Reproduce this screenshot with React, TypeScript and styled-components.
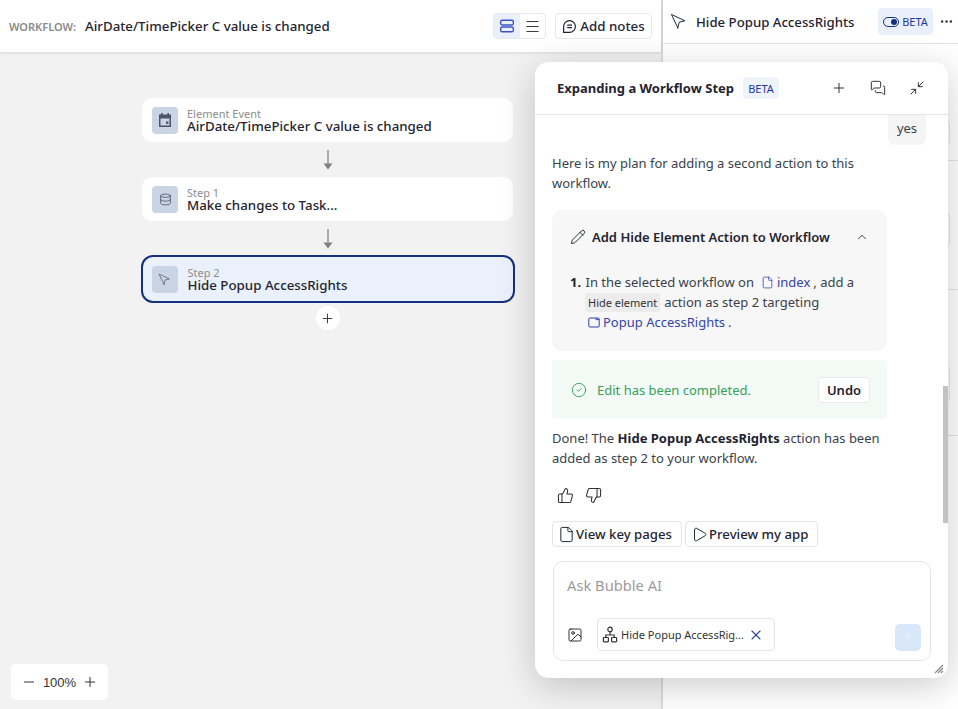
import styled, { createGlobalStyle } from "styled-components";
import {
  ArrowUp,
  ChevronUp,
  CircleCheck,
  Database,
  Ellipsis,
  File,
  Image,
  Menu,
  MessagesSquare,
  Minimize2,
  Minus,
  Navigation,
  Pencil,
  Play,
  Plus,
  ThumbsDown,
  ThumbsUp,
  X,
} from "lucide-react";

const GlobalStyle = createGlobalStyle`
  html, body { margin: 0; height: 100%; }
  body { font-family: "Noto Sans", "Open Sans", "Liberation Sans", sans-serif; color: #1f2430; overflow: hidden; }
  #root { height: 100%; }
  * { box-sizing: border-box; }
`;

const Page = styled.div`
  position: relative;
  width: 958px;
  height: 709px;
  display: flex;
  overflow: hidden;
  background: #f2f2f2;
`;

const LeftSide = styled.div`
  width: 663px;
  display: flex;
  flex-direction: column;
  border-right: 2px solid #dcdcdc;
  flex: none;
`;

const TopBar = styled.div`
  height: 52px;
  background: #fff;
  display: flex;
  align-items: center;
  padding: 0 9px 0 9px;
  box-shadow: 0 1px 3px rgba(0, 0, 0, 0.12);
`;

const WorkflowLabel = styled.span`
  font-size: 11px;
  font-weight: 600;
  color: #8a8a8a;
  margin-right: 9px;
`;

const WorkflowName = styled.span`
  font-size: 13.3px;
  font-weight: 500;
  flex: 1;
`;

const ViewToggle = styled.div`
  display: flex;
  width: 53px;
  height: 26px;
  border: 1px solid #e8e8e8;
  border-radius: 4px;
  margin-right: 9px;
`;

const ToggleCell = styled.div<{ $active?: boolean }>`
  width: 26px;
  display: flex;
  align-items: center;
  justify-content: center;
  background: ${(p) => (p.$active ? "#e9f0fb" : "transparent")};
  color: ${(p) => (p.$active ? "#3c55c4" : "#333")};
`;

const NotesButton = styled.div`
  height: 26px;
  width: 97px;
  border: 1px solid #e8e8e8;
  border-radius: 4px;
  display: flex;
  align-items: center;
  justify-content: center;
  gap: 3px;
  font-size: 13.3px;
  font-weight: 500;
`;

const Canvas = styled.div`
  flex: 1;
  padding: 46px 0 0 142px;
  position: relative;
`;

const Flow = styled.div`
  width: 371px;
  display: flex;
  flex-direction: column;
  align-items: center;
`;

const StepCard = styled.div<{ $selected?: boolean }>`
  width: ${(p) => (p.$selected ? "374px" : "100%")};
  height: ${(p) => (p.$selected ? "48px" : "44px")};
  margin-top: ${(p) => (p.$selected ? "-1px" : "0")};
  background: ${(p) => (p.$selected ? "#eaf1fc" : "#fff")};
  border: ${(p) => (p.$selected ? "2px solid #14307f" : "none")};
  border-radius: ${(p) => (p.$selected ? "12px" : "10px")};
  display: flex;
  align-items: center;
  padding-left: ${(p) => (p.$selected ? "9px" : "10px")};
  gap: ${(p) => (p.$selected ? "10px" : "9px")};
  flex: none;
`;

const StepIcon = styled.div`
  width: 26px;
  height: 27px;
  border-radius: 4px;
  background: #c9d5e5;
  color: #4a5568;
  display: flex;
  align-items: center;
  justify-content: center;
  flex: none;
`;

const StepText = styled.div`
  display: flex;
  flex-direction: column;
`;

const StepKind = styled.span`
  font-size: 11px;
  line-height: 13px;
  color: #8d8d8d;
`;

const StepTitle = styled.span`
  font-size: 13.3px;
  line-height: 13px;
  font-weight: 500;
  color: #1f2430;
`;

const ArrowSlot = styled.div`
  height: 35px;
  display: flex;
  align-items: center;
  justify-content: center;
  color: #808080;
  flex: none;
`;

const AddStep = styled.div`
  width: 24px;
  height: 24px;
  margin-top: 3px;
  border-radius: 50%;
  background: #fff;
  display: flex;
  align-items: center;
  justify-content: center;
  color: #333;
`;

const ZoomBox = styled.div`
  position: absolute;
  left: 11px;
  bottom: 9px;
  width: 97px;
  height: 36px;
  background: #fff;
  border-radius: 5px;
  display: flex;
  align-items: center;
  justify-content: space-between;
  padding: 0 10px;
  font-family: "Liberation Sans", sans-serif;
  font-size: 13px;
  color: #333;
`;

const RightSide = styled.div`
  flex: 1;
  display: flex;
  flex-direction: column;
`;

const PropsHeader = styled.div`
  height: 44px;
  background: #fff;
  border-bottom: 1px solid #e2e2e2;
  display: flex;
  align-items: center;
  padding-left: 7px;
  flex: none;
`;

const PointerIcon = styled(Navigation)`
  transform: rotate(-90deg);
`;

const PropsTitle = styled.span`
  font-size: 13.2px;
  font-weight: 500;
  margin-left: 9px;
  width: 182px;
  white-space: nowrap;
`;

const BetaToggle = styled.div`
  width: 55px;
  height: 27px;
  border-radius: 4px;
  background: #e9f0fb;
  color: #1e3a9e;
  font-size: 11px;
  display: flex;
  align-items: center;
  justify-content: center;
  gap: 3px;
`;

const SwitchTrack = styled.span`
  width: 16px;
  height: 10px;
  border-radius: 5px;
  border: 1px solid #14307f;
  display: flex;
  justify-content: flex-end;
  align-items: center;
  padding: 1px;
`;

const SwitchKnob = styled.span`
  width: 6px;
  height: 6px;
  border-radius: 50%;
  background: #14307f;
`;

const Dots = styled.div`
  margin-left: 6px;
  color: #333;
  display: flex;
`;

const PropsBody = styled.div`
  flex: 1;
  background: #fff;
  display: flex;
  flex-direction: column;
`;

const PropsRow = styled.div<{ $h: number; $top: number }>`
  height: ${(p) => p.$h}px;
  padding-top: ${(p) => p.$top}px;
  border-bottom: 1px solid #e4e4e4;
  flex: none;
`;

const PropsField = styled.div<{ $h: number }>`
  height: ${(p) => p.$h}px;
  margin-right: 8px;
  border: 1px solid #e6e6e6;
  border-radius: 4px;
`;

const ChatPanel = styled.div`
  position: absolute;
  left: 535px;
  top: 62px;
  width: 413px;
  height: 616px;
  background: #fff;
  border-radius: 14px;
  box-shadow: 0 8px 36px rgba(0, 0, 0, 0.2);
  display: flex;
  flex-direction: column;
  overflow: hidden;
`;

const ChatHeader = styled.div`
  height: 53px;
  border-bottom: 1px solid #e4e4e4;
  display: flex;
  align-items: center;
  padding: 0 23px 0 22px;
  flex: none;
`;

const ChatTitle = styled.span`
  font-size: 13px;
  font-weight: 700;
  color: #1f2430;
`;

const BetaTag = styled.span`
  margin-left: 9px;
  width: 36px;
  height: 22px;
  background: #eef3fc;
  border-radius: 4px;
  color: #1e3a9e;
  font-size: 11px;
  display: flex;
  align-items: center;
  justify-content: center;
`;

const HeaderIcons = styled.div`
  margin-left: auto;
  display: flex;
  gap: 23px;
  color: #333;
`;

const ChatBody = styled.div`
  position: relative;
  flex: 1;
  padding: 0 17px;
  font-size: 13px;
  line-height: 20px;
  color: #3a3f4a;
`;

const Scrollbar = styled.div`
  position: absolute;
  right: 0;
  top: 271px;
  width: 5px;
  height: 137px;
  background: #c2c2c2;
`;

const YesBubble = styled.div`
  width: 38px;
  height: 30px;
  margin-left: auto;
  margin-right: 5px;
  padding-bottom: 5px;
  background: #f5f5f5;
  border-radius: 0 0 7px 7px;
  display: flex;
  align-items: center;
  justify-content: center;
`;

const Paragraph = styled.p<{ $gap: number }>`
  margin: ${(p) => p.$gap}px 0 0;
  width: 335px;
  font-weight: 400;

  b {
    font-weight: 700;
    color: #1f2430;
  }
`;

const PlanCard = styled.div`
  margin-top: 17px;
  width: 335px;
  height: 141px;
  background: #f7f7f7;
  border-radius: 10px;
  padding: 17px 18px;
`;

const PlanHead = styled.div`
  display: flex;
  align-items: center;
  gap: 6px;
  font-size: 13px;
  font-weight: 600;
  color: #1f2430;
  height: 20px;
`;

const PlanChevron = styled.span`
  margin-left: auto;
  display: flex;
`;

const PlanList = styled.div`
  margin-top: 25px;
  line-height: 20px;
`;

const PlanLine = styled.div<{ $indent?: boolean }>`
  display: flex;
  align-items: center;
  height: 20px;
  padding-left: ${(p) => (p.$indent ? "15px" : "0")};
  white-space: pre;
`;

const Num = styled.b`
  font-weight: 700;
  color: #1f2430;
  margin-right: 1px;
`;

const LinkRef = styled.span<{ $flush?: boolean }>`
  color: #3344a8;
  display: inline-flex;
  align-items: center;
  gap: 3px;
  margin: 0 3px 0 ${(p) => (p.$flush ? "3px" : "7px")};
`;

const CodeTag = styled.span`
  background: #ececec;
  border-radius: 3px;
  font-size: 11px;
  padding: 0 3px;
  height: 19px;
  line-height: 19px;
  margin-right: 4px;
  color: #333;
`;

const DoneCard = styled.div`
  margin-top: 9px;
  width: 335px;
  height: 59px;
  background: #f4fbf6;
  border-radius: 4px;
  display: flex;
  align-items: center;
  padding: 0 17px 0 19px;
  color: #34a05a;
  gap: 10px;
`;

const UndoButton = styled.div`
  margin-left: auto;
  width: 52px;
  height: 26px;
  background: #fff;
  border: 1px solid #eaeaea;
  border-radius: 4px;
  color: #1f2430;
  font-weight: 600;
  display: flex;
  align-items: center;
  justify-content: center;
`;

const Feedback = styled.div`
  margin: 19px 0 0 5px;
  display: flex;
  gap: 11px;
  height: 16px;
  color: #333;
`;

const ActionRow = styled.div`
  margin-top: 18px;
  display: flex;
  gap: 3px;
`;

const ActionChip = styled.div<{ $w: number }>`
  width: ${(p) => p.$w}px;
  height: 26px;
  border: 1px solid #e4e4e4;
  border-radius: 4px;
  display: flex;
  align-items: center;
  gap: 1px;
  padding-left: 5px;
  font-size: 13.2px;
  font-weight: 500;
  color: #1f2430;
`;

const Composer = styled.div`
  margin: 13px 17px 17px 18px;
  height: 100px;
  border: 1px solid #e4e4e4;
  border-radius: 10px;
  padding: 13px 9px 9px 13px;
  display: flex;
  flex-direction: column;
  flex: none;
`;

const Placeholder = styled.div`
  font-size: 14.7px;
  line-height: 20px;
  color: #9c9c9c;
`;

const ComposerFoot = styled.div`
  margin-top: auto;
  display: flex;
  align-items: center;
`;

const ContextChip = styled.div`
  margin-left: 14px;
  width: 178px;
  height: 33px;
  border: 1px solid #e4e4e4;
  border-radius: 4px;
  display: flex;
  align-items: center;
  padding-left: 4px;
  font-size: 11px;
  color: #333;
  gap: 3px;
`;

const ChipClose = styled.span`
  margin-left: auto;
  margin-right: 10px;
  display: flex;
  color: #3344a8;
`;

const SendButton = styled.div`
  margin-left: auto;
  margin-top: 5px;
  width: 26px;
  height: 27px;
  border-radius: 5px;
  background: #d9e7fb;
  color: #eef4fd;
  display: flex;
  align-items: center;
  justify-content: center;
`;

const ResizeGrip = styled.svg`
  position: absolute;
  right: 4px;
  bottom: 4px;
`;

function RowsIcon() {
  return (
    <svg width="16" height="14" viewBox="0 0 16 14" fill="none" stroke="currentColor" strokeWidth="1.4">
      <rect x="1.7" y="1.2" width="12.6" height="4.8" rx="1.4" />
      <rect x="1.7" y="8" width="12.6" height="4.8" rx="1.4" />
    </svg>
  );
}

function NoteIcon() {
  return (
    <svg width="15" height="15" viewBox="0 0 15 15" fill="none" stroke="currentColor" strokeWidth="1.2">
      <path d="M1.6 13.4V7.5a5.9 5.9 0 1 1 5.9 5.9z" strokeLinejoin="round" />
      <path d="M5.2 6.2h4.8M5.2 8.6h4.8" />
    </svg>
  );
}

function EventIcon() {
  return (
    <svg width="16" height="16" viewBox="0 0 16 16" fill="currentColor">
      <rect x="4" y="1" width="1.6" height="3" />
      <rect x="10.4" y="1" width="1.6" height="3" />
      <path d="M2 2.6h12v12.4H2zM3.5 6.6v7h9v-7z" fillRule="evenodd" />
      <rect x="9" y="9.5" width="2.4" height="2.4" />
    </svg>
  );
}

function FlowArrow() {
  return (
    <svg width="12" height="20" viewBox="0 0 12 20" fill="currentColor">
      <rect x="5.4" y="0" width="1.2" height="16" />
      <path d="M1.5 13.5h9L6 19.5z" />
    </svg>
  );
}

function PopupIcon() {
  return (
    <svg width="12" height="11" viewBox="0 0 12 11" fill="none" stroke="currentColor" strokeWidth="1">
      <rect x="0.8" y="1" width="10.4" height="9" rx="1" />
      <path d="M8 1v1.6h3.2" />
    </svg>
  );
}

function TreeIcon() {
  return (
    <svg width="16" height="17" viewBox="0 0 16 17" fill="none" stroke="currentColor" strokeWidth="1.2">
      <circle cx="8" cy="3.4" r="2.2" />
      <path d="M8 5.6v3.4M3.8 11.5V9h8.4v2.5" />
      <rect x="1.4" y="11.5" width="5" height="4.4" rx="0.8" />
      <rect x="9.6" y="11.5" width="5" height="4.4" rx="0.8" />
    </svg>
  );
}

export default function App() {
  return (
    <Page>
      <GlobalStyle />
      <LeftSide>
        <TopBar>
          <WorkflowLabel>WORKFLOW:</WorkflowLabel>
          <WorkflowName>AirDate/TimePicker C value is changed</WorkflowName>
          <ViewToggle>
            <ToggleCell $active><RowsIcon /></ToggleCell>
            <ToggleCell><Menu size={17} strokeWidth={1.4} /></ToggleCell>
          </ViewToggle>
          <NotesButton><NoteIcon />Add notes</NotesButton>
        </TopBar>
        <Canvas>
          <Flow>
            <StepCard>
              <StepIcon><EventIcon /></StepIcon>
              <StepText>
                <StepKind>Element Event</StepKind>
                <StepTitle>AirDate/TimePicker C value is changed</StepTitle>
              </StepText>
            </StepCard>
            <ArrowSlot><FlowArrow /></ArrowSlot>
            <StepCard>
              <StepIcon><Database size={13} strokeWidth={1.5} /></StepIcon>
              <StepText>
                <StepKind>Step 1</StepKind>
                <StepTitle>Make changes to Task...</StepTitle>
              </StepText>
            </StepCard>
            <ArrowSlot><FlowArrow /></ArrowSlot>
            <StepCard $selected>
              <StepIcon><PointerIcon size={13} strokeWidth={1.3} /></StepIcon>
              <StepText>
                <StepKind>Step 2</StepKind>
                <StepTitle>Hide Popup AccessRights</StepTitle>
              </StepText>
            </StepCard>
            <AddStep><Plus size={15} strokeWidth={1.5} /></AddStep>
          </Flow>
          <ZoomBox>
            <Minus size={16} strokeWidth={1.5} />
            100%
            <Plus size={16} strokeWidth={1.5} />
          </ZoomBox>
        </Canvas>
      </LeftSide>
      <RightSide>
        <PropsHeader>
          <PointerIcon size={17} strokeWidth={1.4} />
          <PropsTitle>Hide Popup AccessRights</PropsTitle>
          <BetaToggle><SwitchTrack><SwitchKnob /></SwitchTrack>BETA</BetaToggle>
          <Dots><Ellipsis size={15} /></Dots>
        </PropsHeader>
        <PropsBody>
          <PropsRow $h={117} $top={76}><PropsField $h={25} /></PropsRow>
          <PropsRow $h={129} $top={51}><PropsField $h={34} /></PropsRow>
          <PropsRow $h={146} $top={76}><PropsField $h={36} /></PropsRow>
        </PropsBody>
      </RightSide>
      <ChatPanel>
        <ChatHeader>
          <ChatTitle>Expanding a Workflow Step</ChatTitle>
          <BetaTag>BETA</BetaTag>
          <HeaderIcons>
            <Plus size={16} strokeWidth={1.5} />
            <MessagesSquare size={16} strokeWidth={1.5} />
            <Minimize2 size={16} strokeWidth={1.5} />
          </HeaderIcons>
        </ChatHeader>
        <ChatBody>
          <YesBubble>yes</YesBubble>
          <Paragraph $gap={8}>Here is my plan for adding a second action to this workflow.</Paragraph>
          <PlanCard>
            <PlanHead>
              <Pencil size={16} strokeWidth={1.4} />
              Add Hide Element Action to Workflow
              <PlanChevron><ChevronUp size={14} strokeWidth={1.5} /></PlanChevron>
            </PlanHead>
            <PlanList>
              <PlanLine>
                <Num>1.</Num> In the selected workflow on
                <LinkRef><File size={13} strokeWidth={1.4} />index</LinkRef>, add a
              </PlanLine>
              <PlanLine $indent>
                <CodeTag>Hide element</CodeTag>action as step 2 targeting
              </PlanLine>
              <PlanLine $indent>
                <LinkRef $flush><PopupIcon />Popup AccessRights</LinkRef>.
              </PlanLine>
            </PlanList>
          </PlanCard>
          <DoneCard>
            <CircleCheck size={16} strokeWidth={1.4} />
            Edit has been completed.
            <UndoButton>Undo</UndoButton>
          </DoneCard>
          <Paragraph $gap={9}>Done! The <b>Hide Popup AccessRights</b> action has been added as step 2 to your workflow.</Paragraph>
          <Feedback>
            <ThumbsUp size={17} strokeWidth={1.5} />
            <ThumbsDown size={17} strokeWidth={1.5} />
          </Feedback>
          <ActionRow>
            <ActionChip $w={130}><File size={17} strokeWidth={1.4} />View key pages</ActionChip>
            <ActionChip $w={133}><Play size={17} strokeWidth={1.4} />Preview my app</ActionChip>
          </ActionRow>
          <Scrollbar />
        </ChatBody>
        <Composer>
          <Placeholder>Ask Bubble AI</Placeholder>
          <ComposerFoot>
            <Image size={16} strokeWidth={1.4} />
            <ContextChip>
              <TreeIcon />
              Hide Popup AccessRig...
              <ChipClose><X size={16} strokeWidth={1.7} /></ChipClose>
            </ContextChip>
            <SendButton><ArrowUp size={14} strokeWidth={1.5} /></SendButton>
          </ComposerFoot>
        </Composer>
        <ResizeGrip width="10" height="10" viewBox="0 0 10 10">
          <path d="M9 1 L1 9 M9 4 L4 9 M9 7 L7 9" stroke="#888" strokeWidth="1.2" />
        </ResizeGrip>
      </ChatPanel>
    </Page>
  );
}
